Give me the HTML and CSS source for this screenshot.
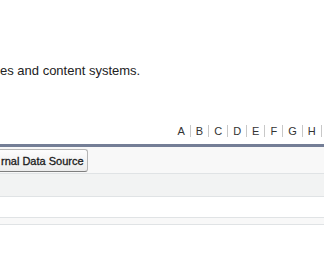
FILE: index.html
```html
<!DOCTYPE html>
<html lang="en">
<head>
    <meta charset="UTF-8">
    <meta name="viewport" content="width=device-width, initial-scale=1.0">
    <title>External Data Sources</title>
    <link rel="stylesheet" href="styles.css">
</head>
<body>
    <div class="page">
        <p class="desc">es and content systems.</p>

        <div class="rolodex">
            <a href="#">A</a>
            <a href="#">B</a>
            <a href="#">C</a>
            <a href="#">D</a>
            <a href="#">E</a>
            <a href="#">F</a>
            <a href="#">G</a>
            <a href="#">H</a>
        </div>

        <div class="list-block">
            <div class="toolbar">
                <button class="btn" type="button">rnal Data Source</button>
            </div>
            <div class="list-head"></div>
            <div class="list-row"></div>
            <div class="list-foot"></div>
        </div>
    </div>
</body>
</html>
```

FILE: styles.css
```css
:root {
    --text-color: #222;
    --bar-color: #747e96;
    --line-color: #e0e3e5;
    --block-bg: #f8f8f8;
    --head-bg: #f2f3f3;
}

html, body {
    overflow: hidden;
}

body {
    margin: 0;
    font-family: "Liberation Sans", Arial, sans-serif;
    color: var(--text-color);
    background-color: #fff;
}

.page {
    width: 324px;
}

.desc {
    margin: 63px 0 0;
    font-size: 13px;
    line-height: 15px;
    white-space: nowrap;
}

.rolodex {
    display: flex;
    margin-top: 47px;
    padding-left: 172.5px;
    font-size: 11px;
    line-height: 12px;
    white-space: nowrap;
}

.rolodex a {
    padding: 0 5px;
    border-right: 1px solid #c8c8c8;
    color: #333;
    text-decoration: none;
}

.list-block {
    margin-top: 7px;
    border-top: 3px solid var(--bar-color);
    background-color: var(--block-bg);
}

.toolbar {
    padding: 2px 0 1px;
}

.btn {
    display: block;
    height: 23px;
    margin-left: -3px;
    padding: 0 3px;
    border: 1px solid #b5b5b5;
    border-bottom-color: #7f7f7f;
    border-radius: 3px;
    background: linear-gradient(#fdfdfd, #ececec);
    font-family: inherit;
    font-size: 11px;
    color: #1a1a1a;
    -webkit-text-stroke: 0.3px #1a1a1a;
}

.list-head {
    height: 22px;
    border-top: 1px solid var(--line-color);
    border-bottom: 1px solid var(--line-color);
    background-color: var(--head-bg);
}

.list-row {
    height: 20px;
    background-color: #fff;
}

.list-foot {
    height: 6px;
    border-top: 1px solid var(--line-color);
    border-bottom: 1px solid var(--line-color);
    background-color: var(--block-bg);
}
```
